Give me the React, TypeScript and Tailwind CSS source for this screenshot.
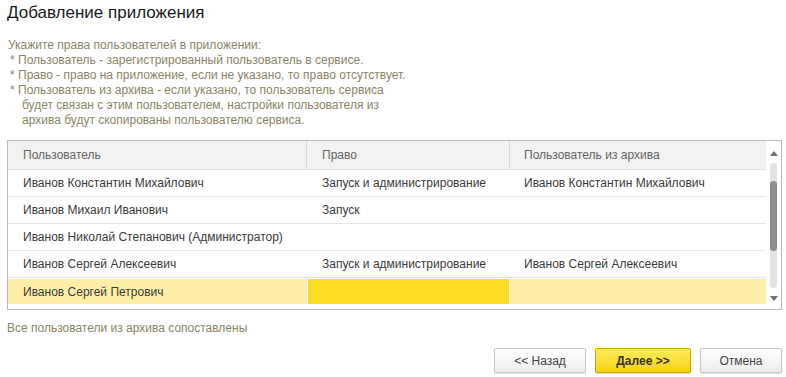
import React from "react"

const rows = [
  { user: "Иванов Константин Михайлович", right: "Запуск и администрирование", archive: "Иванов Константин Михайлович" },
  { user: "Иванов Михаил Иванович", right: "Запуск", archive: "" },
  { user: "Иванов Николай Степанович (Администратор)", right: "", archive: "" },
  { user: "Иванов Сергей Алексеевич", right: "Запуск и администрирование", archive: "Иванов Сергей Алексеевич" },
]

function ScrollBar() {
  return (
    <div className="w-[15px] flex flex-col items-center bg-white">
      <div className="h-[22px] flex items-center justify-center pt-[2px]">
        <div className="w-0 h-0 border-l-[4px] border-r-[4px] border-b-[5px] border-l-transparent border-r-transparent border-b-[#707070]" />
      </div>
      <div className="w-[7px] h-[125px] rounded-[4px] bg-[#e3e3e3] flex flex-col">
        <div className="h-[18px]" />
        <div className="h-[70px] rounded-[4px] bg-[#8e8e8e]" />
      </div>
      <div className="flex-1 flex items-center justify-center">
        <div className="w-0 h-0 border-l-[4px] border-r-[4px] border-t-[5px] border-l-transparent border-r-transparent border-t-[#707070]" />
      </div>
    </div>
  )
}

export default function App() {
  return (
    <div
      className="w-[786px] h-[377px] bg-white flex flex-col overflow-hidden"
      style={{ fontFamily: '"Liberation Sans", Arial, sans-serif' }}
    >
      <div className="pl-[7px] pt-[2px] text-[17px] leading-[22px] text-[#1a1a1a]">Добавление приложения</div>

      <div className="mt-[14px] pl-[8px] text-[12px] leading-[15px] text-[#8a8566]">
        <div>Укажите права пользователей в приложении:</div>
        <div className="pl-[2px]">* Пользователь - зарегистрированный пользователь в сервисе.</div>
        <div className="pl-[2px]">* Право - право на приложение, если не указано, то право отсутствует.</div>
        <div className="pl-[2px]">* Пользователь из архива - если указано, то пользователь сервиса</div>
        <div className="pl-[14px]">будет связан с этим пользователем, настройки пользователя из</div>
        <div className="pl-[14px]">архива будут скопированы пользователю сервиса.</div>
      </div>

      <div className="mt-[12px] ml-[7px] w-[775px] h-[170px] border border-[#b9b9b9] flex text-[12px] text-[#3a3a3a]">
        <div className="w-[758px] flex flex-col">
          <div className="h-[29px] flex bg-[#f2f2f2] text-[#666] border-b border-[#e2e2e2]">
            <div className="w-[299px] pl-[15px] flex items-center border-r border-[#d9d9d9]">Пользователь</div>
            <div className="w-[203px] pl-[15px] flex items-center border-r border-[#d9d9d9]">Право</div>
            <div className="flex-1 pl-[14px] flex items-center">Пользователь из архива</div>
          </div>
          {rows.map((r) => (
            <div key={r.user} className="h-[27px] flex border-b border-[#e6e6e6]">
              <div className="w-[299px] pl-[15px] flex items-center">{r.user}</div>
              <div className="w-[203px] pl-[15px] flex items-center">{r.right}</div>
              <div className="flex-1 pl-[14px] flex items-center">{r.archive}</div>
            </div>
          ))}
          <div className="h-[25px] mt-[1px] flex bg-[#fdf0a6]">
            <div className="w-[299px] pl-[15px] flex items-center">Иванов Сергей Петрович</div>
            <div className="w-[203px] bg-[#fcdb24] border-l border-r border-white" />
            <div className="flex-1" />
          </div>
        </div>
        <ScrollBar />
      </div>

      <div className="mt-[11px] pl-[7px] text-[12px] leading-[15px] text-[#8a8566]">Все пользователи из архива сопоставлены</div>

      <div className="mt-[12px] pr-[4px] flex justify-end gap-[9px] text-[12px]">
        <button className="w-[92px] h-[25px] rounded-[2px] border border-[#c6c6c6] bg-gradient-to-b from-white to-[#ececec] text-[#444] shadow-[0_1px_1px_rgba(0,0,0,0.12)]">
          &lt;&lt; Назад
        </button>
        <button className="w-[96px] h-[25px] rounded-[2px] border border-[#c9a800] bg-gradient-to-b from-[#ffeb55] to-[#f6d200] text-[#333] font-bold shadow-[0_1px_1px_rgba(0,0,0,0.15)]">
          Далее &gt;&gt;
        </button>
        <button className="w-[82px] h-[25px] rounded-[2px] border border-[#c6c6c6] bg-gradient-to-b from-white to-[#ececec] text-[#444] shadow-[0_1px_1px_rgba(0,0,0,0.12)]">
          Отмена
        </button>
      </div>
    </div>
  )
}
